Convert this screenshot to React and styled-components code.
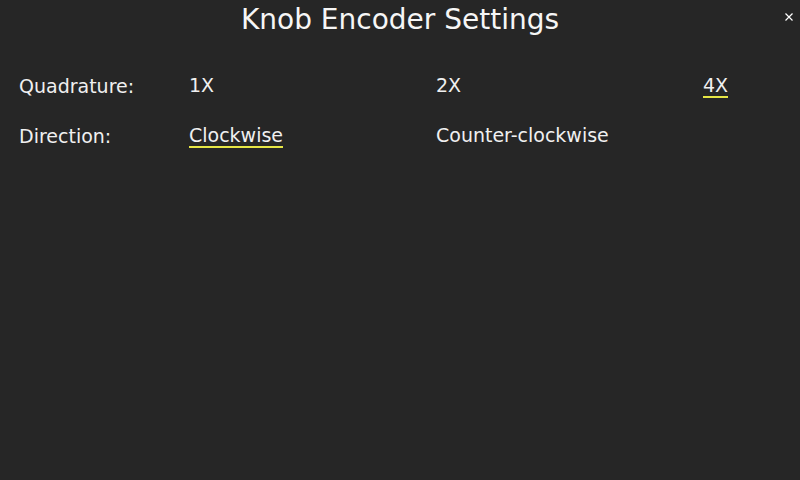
import React, { useState } from 'react';
import styled, { createGlobalStyle } from 'styled-components';

const GlobalStyle = createGlobalStyle`
  html, body {
    margin: 0;
    padding: 0;
    background: #262626;
  }
  body {
    width: 800px;
    height: 480px;
    overflow: hidden;
    font-family: 'DejaVu Sans', sans-serif;
    color: #f4f4f4;
  }
`;

const Screen = styled.div`
  position: relative;
  width: 800px;
  height: 480px;
  background: #262626;
`;

const Title = styled.h1`
  margin: 0;
  padding-top: 3px;
  text-align: center;
  font-size: 28px;
  font-weight: normal;
  line-height: 34px;
  color: #f6f6f6;
`;

const CloseButton = styled.button`
  position: absolute;
  top: 11px;
  right: 5px;
  width: 12px;
  height: 12px;
  padding: 0;
  border: none;
  background: none;
  cursor: pointer;
  display: flex;
  align-items: center;
  justify-content: center;
`;

const Settings = styled.div`
  display: grid;
  grid-template-columns: 170px 247px 267px 1fr;
  row-gap: 26px;
  padding: 37px 0 0 19px;
`;

const Label = styled.span`
  font-size: 19px;
  line-height: 24px;
  color: #f0f0f0;
  white-space: nowrap;
`;

const Option = styled.span`
  justify-self: start;
  box-sizing: border-box;
  height: 24px;
  font-size: 19px;
  line-height: 22px;
  color: #f0f0f0;
  white-space: nowrap;
  cursor: pointer;
  border-bottom: 2px solid ${(p) => (p.selected ? '#e6e645' : 'transparent')};
`;

const rows = [
  { label: 'Quadrature:', options: ['1X', '2X', '4X'], initial: '4X' },
  { label: 'Direction:', options: ['Clockwise', 'Counter-clockwise'], initial: 'Clockwise' },
];

const SettingRow = ({ label, options, initial }) => {
  const [value, setValue] = useState(initial);
  return (
    <>
      <Label>{label}</Label>
      {options.map((o) => (
        <Option key={o} selected={o === value} onClick={() => setValue(o)}>
          {o}
        </Option>
      ))}
      {Array.from({ length: 3 - options.length }, (_, i) => (
        <span key={i} />
      ))}
    </>
  );
};

const App = () => (
  <Screen>
    <GlobalStyle />
    <Title>Knob Encoder Settings</Title>
    <CloseButton aria-label="Close">
      <svg width="8" height="8" viewBox="0 0 8 8">
        <path d="M0.5 0.5 L7.5 7.5 M7.5 0.5 L0.5 7.5" stroke="#ffffff" strokeWidth="1.2" />
      </svg>
    </CloseButton>
    <Settings>
      {rows.map((r) => (
        <SettingRow key={r.label} {...r} />
      ))}
    </Settings>
  </Screen>
);

export default App;
